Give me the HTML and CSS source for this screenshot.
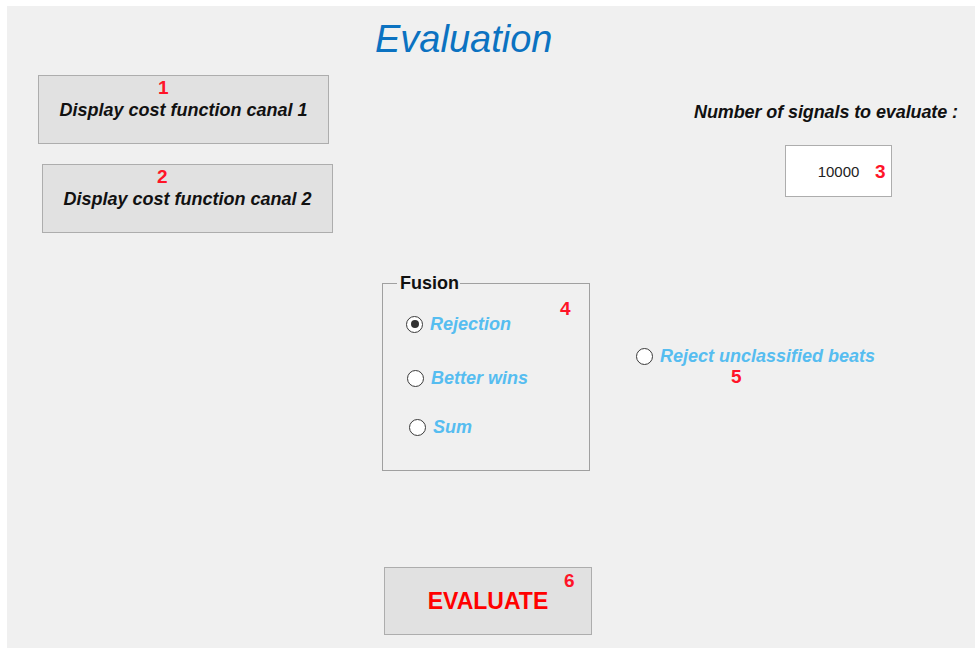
FILE: index.html
```html
<!DOCTYPE html>
<html lang="en">
<head>
<meta charset="utf-8">
<title>Evaluation</title>
<link rel="stylesheet" href="styles.css">
</head>
<body>
<main class="figure">
  <h1 class="title">Evaluation</h1>

  <section class="row-top">
    <div class="cost-buttons">
      <button class="btn btn-cost btn-canal1" type="button">
        <span class="tag tag-1">1</span>
        <span class="btn-label">Display cost function canal 1</span>
      </button>
      <button class="btn btn-cost btn-canal2" type="button">
        <span class="tag tag-2">2</span>
        <span class="btn-label">Display cost function canal 2</span>
      </button>
    </div>

    <div class="signals">
      <label class="signals-label" for="nsig">Number of signals to evaluate :</label>
      <div class="num-box">
        <input id="nsig" class="num-input" type="text" value="10000">
        <span class="tag tag-3">3</span>
      </div>
    </div>
  </section>

  <section class="row-mid">
    <fieldset class="fusion">
      <legend class="fusion-legend">Fusion</legend>
      <label class="opt opt-rejection">
        <input class="radio" type="radio" name="fusion" checked>
        <span class="opt-text">Rejection</span>
        <span class="tag tag-4">4</span>
      </label>
      <label class="opt opt-better">
        <input class="radio" type="radio" name="fusion">
        <span class="opt-text">Better wins</span>
      </label>
      <label class="opt opt-sum">
        <input class="radio" type="radio" name="fusion">
        <span class="opt-text">Sum</span>
      </label>
    </fieldset>

    <label class="opt opt-reject">
      <input class="radio" type="radio" name="reject">
      <span class="opt-text">Reject unclassified beats</span>
      <span class="tag tag-5">5</span>
    </label>
  </section>

  <section class="row-bottom">
    <button class="btn btn-evaluate" type="button">
      <span class="tag tag-6">6</span>
      <span class="evaluate-label">EVALUATE</span>
    </button>
  </section>
</main>
</body>
</html>
```

FILE: styles.css
```css
* {
  box-sizing: border-box;
}

html,
body {
  margin: 0;
  padding: 0;
  background: #ffffff;
}

body {
  font-family: "Liberation Sans", Arial, sans-serif;
  color: #111111;
  overflow: hidden;
}

/* grey figure window */
.figure {
  display: block;
  margin: 6px 2px 0 7px;
  height: 642px;
  padding-top: 14px;
  background: #f0f0f0;
}

.title {
  margin: 0 0 0 368px;
  font-size: 38px;
  line-height: 38px;
  font-style: italic;
  font-weight: normal;
  color: #0b72c1;
}

/* red index numbers laid over the controls */
.tag {
  position: absolute;
  font-family: "Liberation Sans", Arial, sans-serif;
  font-size: 19px;
  line-height: 19px;
  font-weight: bold;
  font-style: normal;
  color: #ff1428;
}

/* push buttons */
.btn {
  position: relative;
  display: flex;
  align-items: center;
  justify-content: center;
  margin: 0;
  padding: 0;
  border: 1px solid #adadad;
  background: #e1e1e1;
  font: inherit;
  color: inherit;
  cursor: default;
}

.btn-label {
  font-size: 18px;
  line-height: 20px;
  font-weight: bold;
  font-style: italic;
  color: #111111;
}

/* top row: cost buttons + signal count */
.row-top {
  display: flex;
  margin-top: 17px;
}

.cost-buttons {
  display: flex;
  flex-direction: column;
  margin-left: 31px;
}

.btn-cost {
  width: 291px;
  height: 69px;
}

.btn-canal2 {
  margin-top: 20px;
  margin-left: 4px;
}

.tag-1 {
  top: 2px;
  left: 119px;
}

.tag-2 {
  top: 2px;
  left: 114px;
}

.signals {
  display: flex;
  flex-direction: column;
  margin-left: 361px;
}

.signals-label {
  margin-top: 28px;
  font-size: 18px;
  line-height: 18px;
  font-weight: bold;
  font-style: italic;
  letter-spacing: -0.1px;
  color: #111111;
  white-space: nowrap;
}

.num-box {
  position: relative;
  width: 107px;
  height: 52px;
  margin-top: 24px;
  margin-left: 91px;
  border: 1px solid #adadad;
  background: #ffffff;
}

.num-input {
  display: block;
  width: 100%;
  height: 100%;
  margin: 0;
  padding: 0;
  border: 0;
  outline: none;
  background: transparent;
  text-align: center;
  font-family: "Liberation Sans", Arial, sans-serif;
  font-size: 15px;
  color: #222222;
}

.tag-3 {
  top: 16px;
  left: 89px;
}

/* middle row: fusion group + reject option */
.row-mid {
  display: flex;
  align-items: flex-start;
  margin-top: 40px;
}

.fusion {
  position: relative;
  width: 208px;
  height: 198px;
  margin: 0 0 0 375px;
  padding: 0;
  min-width: 0;
  border: 1px solid #a0a0a0;
}

.fusion-legend {
  margin-left: 14px;
  padding: 0 1px 0 3px;
  font-size: 18px;
  line-height: 20px;
  font-weight: bold;
  color: #111111;
}

.opt {
  position: relative;
  display: flex;
  align-items: center;
  gap: 7px;
  height: 20px;
}

.opt-text {
  font-size: 18px;
  line-height: 20px;
  font-weight: bold;
  font-style: italic;
  color: #56bdf0;
  white-space: nowrap;
}

.radio {
  appearance: none;
  -webkit-appearance: none;
  flex: none;
  display: grid;
  place-items: center;
  width: 17px;
  height: 17px;
  margin: 0;
  border: 1.5px solid #3a3a3a;
  border-radius: 50%;
  background: #ffffff;
}

.radio:checked::after {
  content: "";
  width: 8px;
  height: 8px;
  border-radius: 50%;
  background: #333333;
}

.opt-rejection {
  margin-top: 21px;
  padding-left: 23px;
}

.opt-better {
  margin-top: 34px;
  padding-left: 24px;
}

.opt-sum {
  margin-top: 29px;
  padding-left: 26px;
}

.tag-4 {
  top: -15px;
  left: 177px;
}

.opt-reject {
  margin-top: 73px;
  margin-left: 46px;
}

.tag-5 {
  top: 21px;
  left: 95px;
}

/* bottom row: evaluate */
.row-bottom {
  display: flex;
  margin-top: 96px;
}

.btn-evaluate {
  width: 208px;
  height: 68px;
  margin-left: 377px;
}

.evaluate-label {
  font-size: 23px;
  line-height: 24px;
  font-weight: bold;
  letter-spacing: 0;
  color: #ff0000;
}

.tag-6 {
  top: 3px;
  left: 179px;
}
```
